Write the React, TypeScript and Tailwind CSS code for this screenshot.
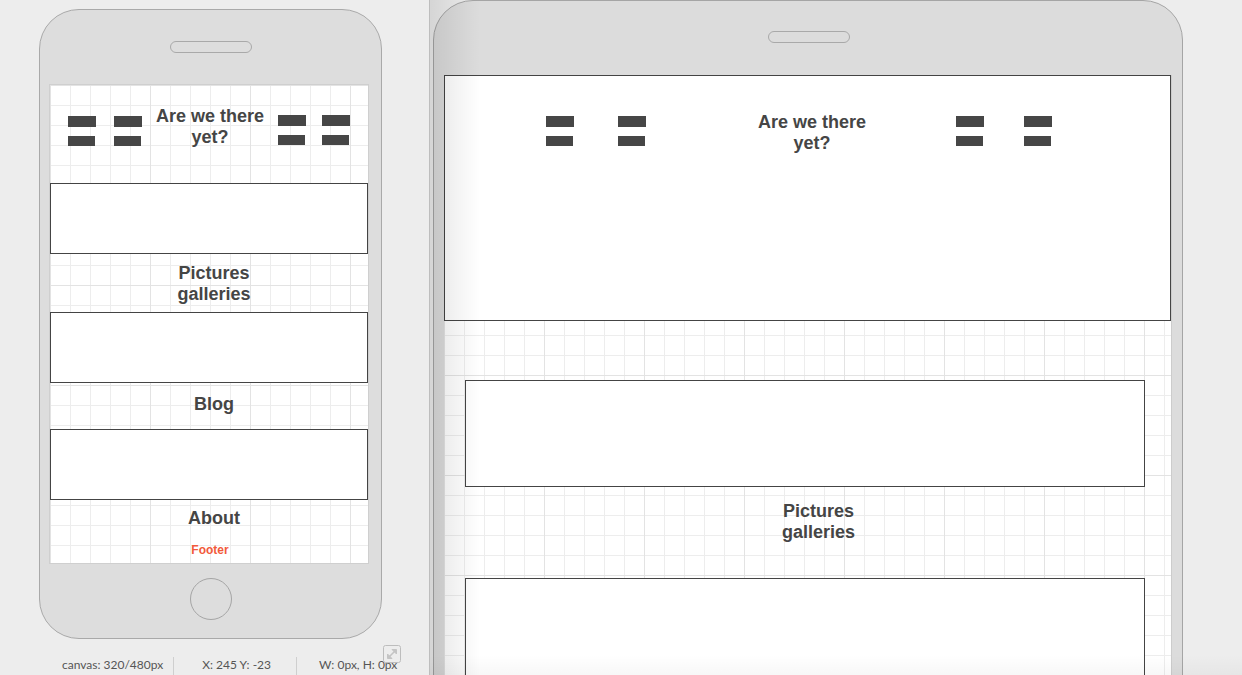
const grid =
  "[background-image:linear-gradient(to_right,#e3e3e3_1px,transparent_1px),linear-gradient(to_bottom,#e3e3e3_1px,transparent_1px),linear-gradient(to_right,#ededed_1px,transparent_1px),linear-gradient(to_bottom,#ededed_1px,transparent_1px)] [background-size:100px_100px,100px_100px,20px_20px,20px_20px]";

const heading = "font-['Liberation_Sans',Arial,sans-serif] font-bold text-[18px] leading-[21px] text-[#454545] text-center";

function Bars() {
  return (
    <div className="flex flex-col gap-[9px] shrink-0">
      <div className="w-[28px] h-[11px] bg-[#464646]" />
      <div className="w-[27px] h-[10px] bg-[#464646]" />
    </div>
  );
}

function Box({ h }: { h: string }) {
  return <div className={`w-full bg-white border border-[#444] ${h}`} />;
}

function ExpandIcon() {
  return (
    <svg width="18" height="18" viewBox="0 0 18 18" fill="none">
      <rect x="0.5" y="0.5" width="17" height="17" rx="2" stroke="#bdbdbd" />
      <path d="M5 13L13 5" stroke="#c4c4c4" strokeWidth="1.6" />
      <path d="M9 4.5H13.5V9Z" fill="#c4c4c4" stroke="#c4c4c4" strokeWidth="1" strokeLinejoin="round" />
      <path d="M9 13.5H4.5V9Z" fill="#c4c4c4" stroke="#c4c4c4" strokeWidth="1" strokeLinejoin="round" />
    </svg>
  );
}

function Phone() {
  return (
    <div className="w-[343px] h-[634px] bg-[#dddddd] border border-[#a9a9a9] rounded-[40px] flex flex-col">
      {/* speaker */}
      <div className="mt-[31px] self-center w-[82px] h-[12px] rounded-full border border-[#a9a9a9]" />

      {/* screen 320x480 */}
      <div className={`mt-[31px] ml-[9px] w-[320px] h-[480px] bg-white border border-[#cfcfcf] flex flex-col ${grid}`}>
        <div className="h-[98px] flex flex-row items-start">
          <div className="ml-[18px] mt-[31px]"><Bars /></div>
          <div className="ml-[18px] mt-[31px]"><Bars /></div>
          <div className={`w-[136px] mt-[21px] ${heading}`}>
            Are we there
            <br />
            yet?
          </div>
          <div className="mt-[30px]"><Bars /></div>
          <div className="ml-[16px] mt-[30px]"><Bars /></div>
        </div>

        <Box h="h-[71px]" />
        <div className={`h-[58px] pt-[9px] pl-[10px] ${heading}`}>
          Pictures
          <br />
          galleries
        </div>
        <Box h="h-[71px]" />
        <div className={`h-[46px] pt-[11px] pl-[10px] ${heading}`}>Blog</div>
        <Box h="h-[71px]" />
        <div className={`pt-[8px] pl-[10px] ${heading}`}>About</div>
        <div className="mt-[13px] pl-[2px] text-center font-['Liberation_Sans',Arial,sans-serif] font-bold text-[12px] leading-[16px] text-[#f25a3b]">
          Footer
        </div>
      </div>

      {/* home button */}
      <div className="mt-[14px] self-center w-[42px] h-[42px] rounded-full border border-[#a5a5a5]" />
    </div>
  );
}

function Tablet() {
  return (
    <div className="ml-[3px] w-[750px] h-[700px] bg-[#dcdcdc] border border-[#a5a5a5] rounded-t-[40px] flex flex-col shrink-0">
      {/* speaker */}
      <div className="mt-[30px] self-center ml-[2px] w-[82px] h-[12px] rounded-full border border-[#a9a9a9]" />

      <div className={`mt-[32px] ml-[10px] w-[728px] flex-1 bg-white border-r border-[#cccccc] flex flex-col ${grid}`}>
        {/* header */}
        <div className="h-[246px] bg-white border border-[#444] flex flex-row items-start">
          <div className="ml-[101px] mt-[40px]"><Bars /></div>
          <div className="ml-[44px] mt-[40px]"><Bars /></div>
          <div className={`ml-[66px] w-[200px] mt-[36px] ${heading}`}>
            Are we there
            <br />
            yet?
          </div>
          <div className="ml-[44px] mt-[40px]"><Bars /></div>
          <div className="ml-[40px] mt-[40px]"><Bars /></div>
        </div>

        <div className="mt-[59px] pl-[21px] w-[701px] flex flex-col">
          <Box h="h-[107px]" />
          <div className={`pt-[14px] h-[91px] pl-[27px] ${heading}`}>
            Pictures
            <br />
            galleries
          </div>
          <Box h="h-[107px]" />
        </div>
      </div>
    </div>
  );
}

export default function App() {
  return (
    <div className="w-[1242px] h-[675px] bg-[#ededed] flex flex-row overflow-hidden font-['Lato','Liberation_Sans',sans-serif]">
      {/* mobile preview */}
      <div className="relative w-[429px] shrink-0 pt-[9px] pl-[39px] flex flex-col">
        <Phone />

        <div className="mt-[18px] flex flex-row items-start text-[12px] leading-[16px] text-[#555]">
          <span className="ml-[23px]">canvas: 320/480px</span>
          <span className="ml-[10px] w-px h-[18px] bg-[#cfcfcf]" />
          <span className="ml-[28px]">X: 245 Y: -23</span>
          <span className="ml-[25px] w-px h-[18px] bg-[#cfcfcf]" />
          <span className="ml-[22px]">W: 0px, H: 0px</span>
        </div>

        <div className="absolute left-[383px] top-[645px]">
          <ExpandIcon />
        </div>
      </div>

      {/* tablet preview */}
      <div className="relative flex-1 flex flex-row border-l border-[#bdbdbd] overflow-hidden">
        <Tablet />
        <div className="absolute left-0 top-0 bottom-0 w-[50px] bg-gradient-to-r from-black/10 to-transparent" />
        <div className="absolute left-0 right-0 bottom-0 h-[20px] bg-gradient-to-b from-transparent to-black/[0.03]" />
      </div>
    </div>
  );
}
